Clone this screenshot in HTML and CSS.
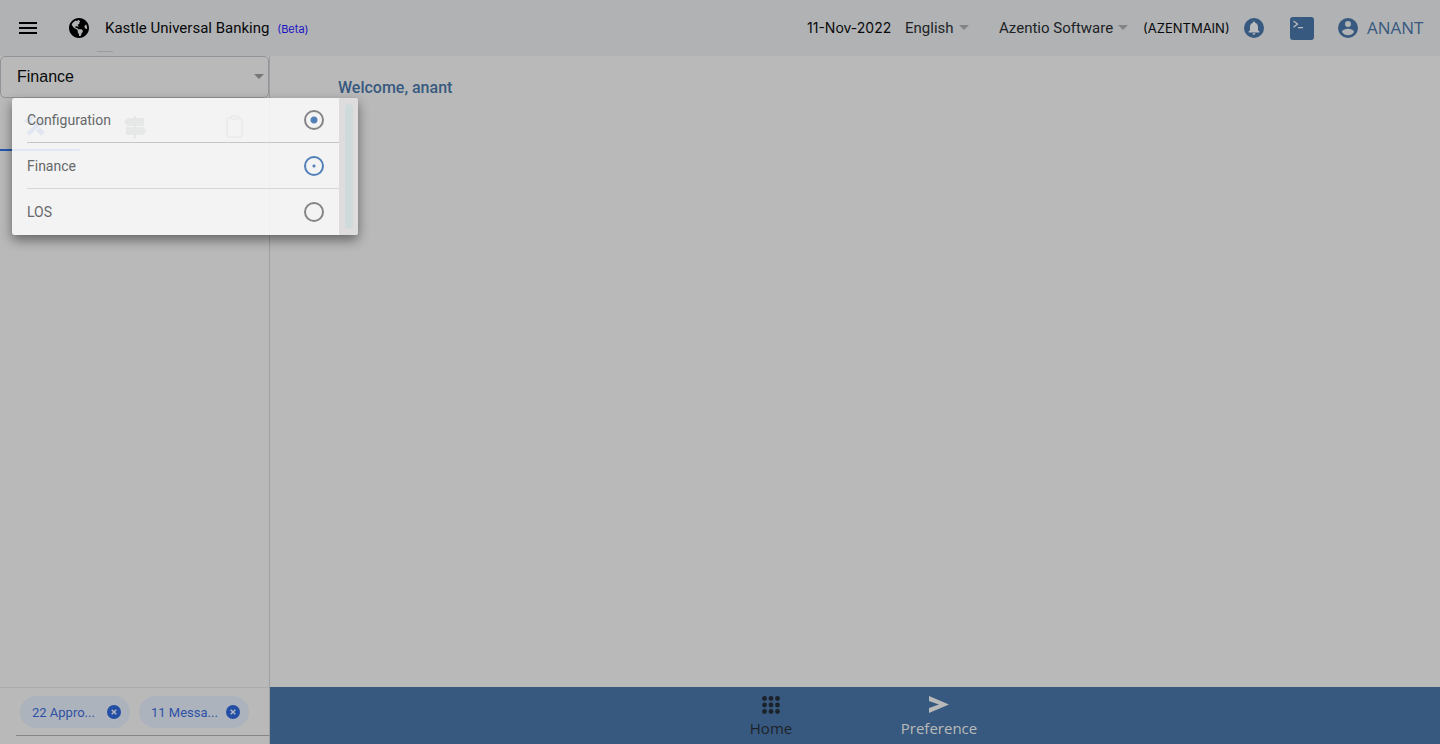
FILE: index.html
```html
<!DOCTYPE html>
<html lang="en">
<head>
<meta charset="utf-8">
<title>Kastle Universal Banking</title>
<link rel="stylesheet" href="styles.css">
</head>
<body>
<div class="app">
  <header class="topbar">
    <button class="icon-btn menu-btn" aria-label="Menu"><svg width="18" height="12" viewBox="0 0 18 12"><path d="M0 0h18v2H0zM0 5h18v2H0zM0 10h18v2H0z"/></svg></button>
    <svg class="globe" width="20" height="20" viewBox="0 8 496 496"><path d="M248 8C111.030 8 0 119.030 0 256s111.030 248 248 248 248-111.030 248-248S384.970 8 248 8zm82.290 357.600c-3.900 3.880-7.990 7.950-11.310 11.280-2.990 3-5.100 6.700-6.170 10.710-1.510 5.660-2.730 11.380-4.770 16.870l-17.390 46.850c-13.760 3-28 4.690-42.650 4.690v-27.380c1.690-12.620-7.640-36.260-22.630-51.250-6-6-9.370-14.140-9.370-22.630v-32.010c0-11.640-6.270-22.340-16.460-27.970-14.370-7.950-34.810-19.060-48.810-26.110-11.480-5.780-22.100-13.140-31.650-21.750l-.8-.72a114.800 114.800 0 0 1-18.060-20.740c-9.380-13.770-24.660-36.420-34.590-51.140 20.470-45.500 57.360-82.040 103.200-101.890l24.010 12.010C203.480 89.740 216 82.010 216 70.110v-11.300c7.990-1.290 16.120-2.110 24.390-2.420l28.300 28.300c6.250 6.250 6.250 16.380 0 22.630L264 112l-10.340 10.340c-3.120 3.120-3.120 8.190 0 11.310l4.690 4.690c3.120 3.120 3.120 8.190 0 11.310l-8 8a8 8 0 0 1-5.660 2.340h-8.990c-2.080 0-4.080.81-5.580 2.270l-9.920 9.650a8 8 0 0 0-1.580 9.310l15.590 31.190c2.660 5.320-1.210 11.580-7.150 11.580h-5.640c-1.930 0-3.790-.7-5.240-1.960l-9.280-8.060a16 16 0 0 0-15.550-3.100l-31.170 10.390a11.950 11.950 0 0 0-8.170 11.340c0 4.530 2.560 8.660 6.610 10.690l11.080 5.540c9.410 4.710 19.790 7.160 30.310 7.160s22.590 27.290 32 32h66.750c8.490 0 16.620 3.370 22.630 9.370l13.690 13.690a30.500 30.500 0 0 1 8.930 21.570 46.540 46.540 0 0 1-13.720 32.980zM417 274.250c-5.790-1.450-10.840-5-14.150-9.970l-17.980-26.970a23.970 23.970 0 0 1 0-26.620l19.590-29.380c2.320-3.470 5.500-6.290 9.240-8.150l12.980-6.490C440.200 193.590 448 223.870 448 256c0 8.670-.74 17.160-1.820 25.540L417 274.250z"/></svg>
    <h1 class="brand">Kastle Universal Banking <span class="beta">(Beta)</span></h1>
    <i class="brand-mark"></i>
    <div class="tools">
      <time class="date">11-Nov-2022</time>
      <span class="select lang"><select aria-label="Language"><option>English</option></select></span>
      <span class="select org"><select aria-label="Organisation"><option>Azentio Software</option></select></span>
      <span class="code">(AZENTMAIN)</span>
      <button class="icon-btn bell" aria-label="Notifications"><svg width="20" height="20" viewBox="0 0 20 20"><circle cx="10" cy="10" r="10" fill="#38597f"/><path fill="#b9bbbd" d="M10 3.400c.6 0 1 .4 1 1v.4c1.900.5 3 2.100 3 4v3.400l1.400 1.400v.8H4.600v-.8L6 12.200V8.800c0-1.900 1.100-3.500 3-4v-.4c0-.6.400-1 1-1zM8.600 15.300h2.800c0 .9-.6 1.500-1.400 1.500s-1.400-.6-1.400-1.500z"/></svg></button>
      <button class="icon-btn terminal" aria-label="Terminal"><svg width="24" height="23" viewBox="0 0 24 23"><rect width="24" height="23" rx="3" fill="#38597f"/><path d="m3.500 4 4 3-4 3.200M8 10.700h5" fill="none" stroke="#b9bbbd" stroke-width="1.300"/></svg></button>
      <button class="icon-btn user"><svg width="20" height="20" viewBox="0 0 24 24"><path fill="#38597f" d="M12 0a12 12 0 1 0 0 24 12 12 0 0 0 0-24zm0 3.600a3.600 3.600 0 1 1 0 7.200 3.600 3.600 0 0 1 0-7.200zm0 17c-3 0-5.700-1.500-7.200-3.900 0-2.400 4.800-3.700 7.200-3.700s7.200 1.300 7.200 3.700A8.600 8.600 0 0 1 12 20.600z"/></svg><span>ANANT</span></button>
    </div>
  </header>
  <div class="body">
    <aside class="sidebar">
      <div class="module-select select"><select aria-label="Module"><option>Finance</option></select></div>
      <div class="module-menu" role="radiogroup" aria-label="Modules">
        <div class="options">
          <label class="option">Configuration<input type="radio" name="module" class="dot-large"></label>
          <label class="option">Finance<input type="radio" name="module" class="dot-small" checked></label>
          <label class="option">LOS<input type="radio" name="module"></label>
        </div>
        <div class="scroll"><i></i></div>
      </div>
      <nav class="tabs">
        <button class="icon-btn tab active" aria-label="Tools"><svg width="24" height="22" viewBox="0 0 24 22"><g fill="none" stroke="#2456b0"><path stroke-width="4" d="M4 19 15.500 8.500"/><path stroke-width="3" d="m14.500 3.500 2 4 5 1.500"/><path stroke-width="2" d="m5 5.500 7 6"/><path stroke-width="5" d="m14 14 5 5"/></g><path fill="#2456b0" d="M0 6 5 1l5 1-2 3-4 4z"/></svg></button>
        <button class="icon-btn tab" aria-label="Directions"><svg width="22" height="22" viewBox="0 0 22 22"><path fill="#565e5e" d="M10 0h2v2h8v8h-8v1h7l4 4-4 4h-7v3h-2v-3H2v-8h8v-1H3L0 6l3-4h7z"/></svg></button>
        <button class="icon-btn tab" aria-label="Clipboard"><svg width="18" height="24" viewBox="0 0 18 24" fill="none" stroke="#707070" stroke-width="1.500"><rect x="1" y="3" width="15" height="19" rx="2"/><rect x="5" y="1" width="8" height="3" rx="1" fill="#b9b9b9"/></svg></button>
      </nav>
      <div class="side-foot">
        <div class="chips">
          <span class="chip">22 Appro...<button class="icon-btn" aria-label="Remove approvals"><svg width="14" height="14" viewBox="0 0 14 14"><circle cx="7" cy="7" r="7" fill="#224fa5"/><path d="m4.700 4.700 4.600 4.600m0-4.600L4.700 9.300" stroke="#b4bac2" stroke-width="1.400"/></svg></button></span>
          <span class="chip">11 Messa...<button class="icon-btn" aria-label="Remove messages"><svg width="14" height="14" viewBox="0 0 14 14"><circle cx="7" cy="7" r="7" fill="#224fa5"/><path d="m4.700 4.700 4.600 4.600m0-4.600L4.700 9.300" stroke="#b4bac2" stroke-width="1.400"/></svg></button></span>
        </div>
      </div>
    </aside>
    <main class="main">
      <h2 class="welcome">Welcome, anant</h2>
      <nav class="bottom-nav">
        <button class="nav-item home"><svg width="18" height="18" viewBox="0 0 18 18"><g fill="#1c2229"><circle cx="2.500" cy="2.500" r="2.400"/><circle cx="9" cy="2.500" r="2.400"/><circle cx="15.500" cy="2.500" r="2.400"/><circle cx="2.500" cy="9" r="2.400"/><circle cx="9" cy="9" r="2.400"/><circle cx="15.500" cy="9" r="2.400"/><circle cx="2.500" cy="15.500" r="2.400"/><circle cx="9" cy="15.500" r="2.400"/><circle cx="15.500" cy="15.500" r="2.400"/></g></svg><span>Home</span></button>
        <button class="nav-item"><svg width="20" height="18" viewBox="0 0 20 18"><path fill="#b9b9b9" d="M0 0l20 8.500L0 17v-5l10-3.500L0 5z"/></svg><span>Preference</span></button>
      </nav>
    </main>
  </div>
</div>
</body>
</html>
```
FILE: styles.css
```css
* { box-sizing: border-box; }
body { margin: 0; font-family: Roboto, "Liberation Sans", sans-serif; font-size: 15px; color: #08090a; background: #b9b9b9; }
svg { display: block; flex: none; }
button, select { font: inherit; color: inherit; }
.icon-btn { padding: 0; border: 0; background: none; display: flex; align-items: center; }
.app { min-height: 100vh; display: flex; flex-direction: column; }

.topbar { position: relative; height: 56px; padding: 0 15px 0 19px; display: flex; align-items: center; background: #b0b2b4; }
.globe { margin: 0 16px 0 32px; }
.brand { margin: 0; font-size: 15px; font-weight: 400; white-space: nowrap; }
.beta { margin-left: 4px; font-family: Inter, sans-serif; font-size: 11px; color: #1a12c4; }
.brand-mark { position: absolute; left: 97px; bottom: 4px; width: 16px; height: 1px; background: #999b9d; }
.tools { margin-left: auto; display: flex; align-items: center; white-space: nowrap; }
.date { width: 98px; font-family: Inter, sans-serif; font-size: 14px; line-height: 16px; padding-bottom: 1px; }
.select { position: relative; display: block; }
.select select { width: 100%; padding: 0; border: 0; background: none; appearance: none; outline: 0; }
.select::after { content: ""; position: absolute; right: 0; top: 50%; margin-top: -3px; border: 5px solid transparent; border-top-color: #818385; border-bottom: 0; pointer-events: none; }
.lang { width: 64px; margin-right: 30px; color: #202326; }
.org { width: 129px; margin-right: 15px; color: #202326; }
.code { width: 101px; font-family: Inter, sans-serif; font-size: 13px; }
.bell { margin-right: 26px; }
.terminal { margin-right: 24px; }
.user { width: 87px; gap: 9px; font-family: "Open Sans", sans-serif; font-size: 17px; line-height: 22px; color: #38597f; }

.body { flex: 1; display: flex; }
.sidebar { position: relative; width: 270px; flex: none; display: flex; flex-direction: column; border-right: 1px solid #9d9fa0; }
.module-select { height: 42px; border: 1px solid #909498; border-radius: 5px; padding: 0 4px 0 16px; font-family: "Liberation Sans", sans-serif; font-size: 16px; }
.module-select select { height: 38px; }
.module-select::after { right: 4px; border-top-color: #777; }
.tabs { height: 55px; display: flex; }
.tab { flex: none; width: 100px; height: 53px; padding-top: 5px; justify-content: center; }
.tab.active { width: 80px; margin-right: 5px; padding-right: 8px; border-bottom: 2px solid #2456b0; }
.module-menu { position: absolute; z-index: 2; left: 12px; top: 42px; width: 346px; height: 137px; display: flex; overflow: hidden; border-radius: 3px; box-shadow: 0 5px 12px rgba(0, 0, 0, .45); background: rgba(251, 251, 251, .88); }
.options { flex: 1; padding-left: 15px; }
.option { height: 46px; padding-right: 15px; display: flex; align-items: center; justify-content: space-between; font-size: 14px; color: #66686a; border-bottom: 1px solid #d6d7d8; }
.option:first-child { height: 45px; border-color: #c6c7c8; }
.option:last-child { border: 0; }
.option input { appearance: none; width: 20px; height: 20px; margin: 0; border: 2px solid #858585; border-radius: 50%; }
.option .dot-large { background: radial-gradient(circle, #5380b8 3px, transparent 4px); }
.option .dot-small { border-color: #5380b8; background: radial-gradient(circle, #5380b8 1px, transparent 2px); }
.scroll { width: 19px; padding: 6px; background: #dedcdd; }
.scroll i { display: block; height: 125px; width: 8px; border-radius: 4px; background: #cfdadb; }
.side-foot { margin-top: auto; height: 57px; padding: 8px 0 8px 16px; border-top: 1px solid #acacac; }
.chips { height: 40px; padding-left: 4px; display: flex; gap: 9px; border-bottom: 1px solid #858585; }
.chip { width: 110px; height: 32px; padding: 0 9px 0 12px; display: flex; align-items: center; justify-content: space-between; border-radius: 16px; background: #adb3bc; color: #2d51a5; font-size: 13px; white-space: nowrap; }

.main { flex: 1; display: flex; flex-direction: column; }
.welcome { margin: 0; padding: 22px 68px; line-height: 20px; font-size: 16px; font-weight: 500; color: #38597f; }
.bottom-nav { margin-top: auto; height: 57px; display: flex; justify-content: center; gap: 68px; background: #38597f; }
.nav-item { width: 100px; padding: 9px 0 0; border: 0; background: none; display: flex; flex-direction: column; align-items: center; gap: 4px; font-family: "Open Sans", sans-serif; font-size: 15px; line-height: 20px; color: #b9b9b9; }
.home { color: #1c2229; }
```
